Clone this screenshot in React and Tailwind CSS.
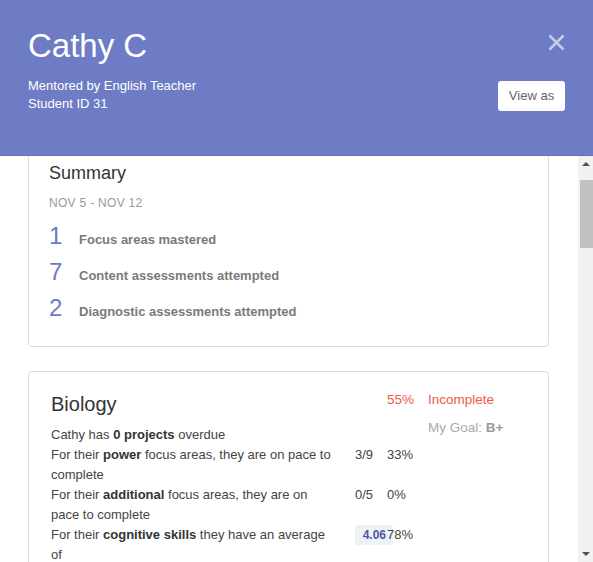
import React, { useEffect, useRef } from 'react'

const font = { fontFamily: '"Liberation Sans", Arial, Helvetica, sans-serif' }

function SummaryRow({ n, label }){
  return (
    <div className="flex items-baseline h-9">
      <span className="w-[30px] text-2xl leading-9 text-[#6b7bc6]">{n}</span>
      <span className="text-[13px] font-bold text-[#7a7a7a]">{label}</span>
    </div>
  )
}

function Arrow({ up }){
  return (
    <div className="h-[15px] flex items-center justify-center">
      <svg width="8" height="5" viewBox="0 0 8 5">
        <path d={up ? 'M0 5 L4 1 L8 5 Z' : 'M0 0 L8 0 L4 4 Z'} fill="#505050" />
      </svg>
    </div>
  )
}

export default function App(){
  const scroller = useRef(null)

  useEffect(()=>{
    // page is shown scrolled a little
    if(scroller.current) scroller.current.scrollTop = 50
  }, [])

  return (
    <div className="h-[562px] w-[593px] flex flex-col bg-white overflow-hidden" style={font}>
      <div className="h-[156px] shrink-0 bg-[#6d7cc4] border-b border-[#6373bb] px-7 flex justify-between">
        <div className="pt-[26px] text-white">
          <h1 className="text-[33px] leading-[40px]">Cathy C</h1>
          <div className="mt-[11px] text-[13px] leading-[18px]">
            Mentored by English Teacher<br />Student ID 31
          </div>
        </div>
        <div className="flex flex-col items-end pt-[34px]">
          <button className="w-[17px] h-[17px] text-[#c6cbe9]">
            <svg viewBox="0 0 17 17" width="17" height="17">
              <path d="M1.5 1.5 L15.5 15.5 M15.5 1.5 L1.5 15.5" stroke="currentColor" strokeWidth="2.6" />
            </svg>
          </button>
          <button className="mt-[30px] h-[30px] w-[67px] bg-white rounded-[3px] text-[13px] text-[#666]">View as</button>
        </div>
      </div>

      <div className="flex-1 flex min-h-0">
        <div ref={scroller} className="flex-1 overflow-hidden">
          <div className="min-h-[1200px] pl-7 pr-[29px] pt-8">
            <div className="rounded-[4px] border border-[#dcdcdc] bg-white px-5 pt-5 pb-5">
              <h2 className="text-lg leading-7 text-[#333]">Summary</h2>
              <div className="mt-2 text-xs leading-4 tracking-[0.3px] text-[#999] uppercase">Nov 5 - Nov 12</div>
              <div className="mt-[7px]">
                <SummaryRow n="1" label="Focus areas mastered" />
                <SummaryRow n="7" label="Content assessments attempted" />
                <SummaryRow n="2" label="Diagnostic assessments attempted" />
              </div>
            </div>

            <div className="mt-6 rounded-[4px] border border-[#dcdcdc] bg-white pt-[18px] pb-5 pl-[22px] pr-5 flex">
              <div className="w-[377px] shrink-0">
                <div className="grid grid-cols-[304px_32px_41px]">
                  <h2 className="text-[20px] leading-7 text-[#333]">Biology</h2>
                  <div />
                  <div className="text-[13.5px] leading-5 text-[#ef5a43]">55%</div>
                </div>
                <div className="mt-[7px] grid grid-cols-[304px_32px_41px] text-[13px] leading-5 text-[#444]">
                  <div className="col-span-3">Cathy has <b className="text-[#333]">0 projects</b> overdue</div>
                  <div className="pr-4">For their <b className="text-[#333]">power</b> focus areas, they are on pace to complete</div>
                  <div>3/9</div>
                  <div>33%</div>
                  <div className="pr-4">For their <b className="text-[#333]">additional</b> focus areas, they are on pace to complete</div>
                  <div>0/5</div>
                  <div>0%</div>
                  <div className="pr-4">For their <b className="text-[#333]">cognitive skills</b> they have an average of</div>
                  <div>
                    <div className="w-[38px] h-5 bg-[#eef2f8] rounded-[2px] pr-[7px] text-right text-[12px] font-bold text-[#4c56a3]">4.06</div>
                  </div>
                  <div>78%</div>
                </div>
              </div>
              <div className="text-[13.5px] leading-5">
                <div className="text-[#ef5a43]">Incomplete</div>
                <div className="mt-2 text-[#aaa]">My Goal: <b className="text-[#999]">B+</b></div>
              </div>
            </div>
          </div>
        </div>

        <div className="w-[15px] shrink-0 bg-[#f1f1f1] flex flex-col">
          <Arrow up />
          <div className="flex-1 pt-[9px] pl-[2px]">
            <div className="h-[68px] bg-[#c1c1c1]" />
          </div>
          <Arrow />
        </div>
      </div>
    </div>
  )
}
